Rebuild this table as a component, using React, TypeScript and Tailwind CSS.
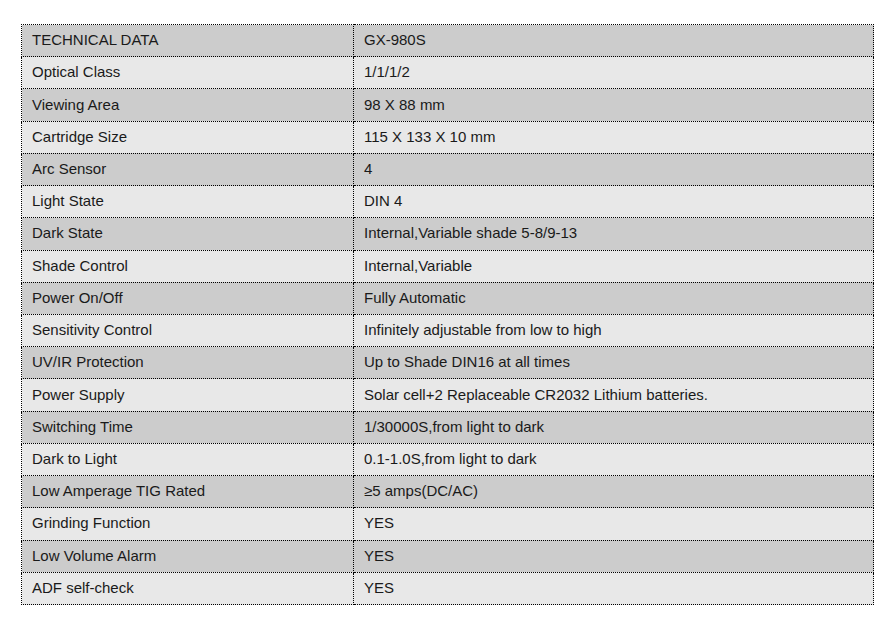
import React from "react";

const rows: [string, string][] = [
  ["TECHNICAL DATA", "GX-980S"],
  ["Optical Class", "1/1/1/2"],
  ["Viewing Area", "98 X 88 mm"],
  ["Cartridge Size", "115 X 133 X 10 mm"],
  ["Arc Sensor", "4"],
  ["Light State", "DIN 4"],
  ["Dark State", "Internal,Variable shade 5-8/9-13"],
  ["Shade Control", "Internal,Variable"],
  ["Power On/Off", "Fully Automatic"],
  ["Sensitivity Control", "Infinitely adjustable from low to high"],
  ["UV/IR Protection", "Up to Shade DIN16 at all times"],
  ["Power Supply", "Solar cell+2 Replaceable CR2032 Lithium batteries."],
  ["Switching Time", "1/30000S,from light to dark"],
  ["Dark to Light", "0.1-1.0S,from light to dark"],
  ["Low Amperage TIG Rated", "≥5 amps(DC/AC)"],
  ["Grinding Function", "YES"],
  ["Low Volume Alarm", "YES"],
  ["ADF self-check", "YES"],
];

export default function App() {
  return (
    <div className="bg-white w-[887px] h-[630px] pt-[24px] pl-[21px] font-['Liberation_Sans',Arial,sans-serif] text-[15px] text-[#1a1a1a]">
      <table className="border-collapse w-[853px] h-[581px] table-fixed">
        <colgroup>
          <col className="w-[332px]" />
          <col />
        </colgroup>
        <tbody>
          {rows.map(([a, b], i) => (
            <tr key={i} className={i % 2 === 0 ? "bg-[#cccccc]" : "bg-[#e8e8e8]"}>
              <td className="border border-dotted border-black pl-[10px] pb-[2px] pt-0 align-middle leading-none">{a}</td>
              <td className="border border-dotted border-black pl-[10px] pb-[2px] pt-0 align-middle leading-none">{b}</td>
            </tr>
          ))}
        </tbody>
      </table>
    </div>
  );
}
